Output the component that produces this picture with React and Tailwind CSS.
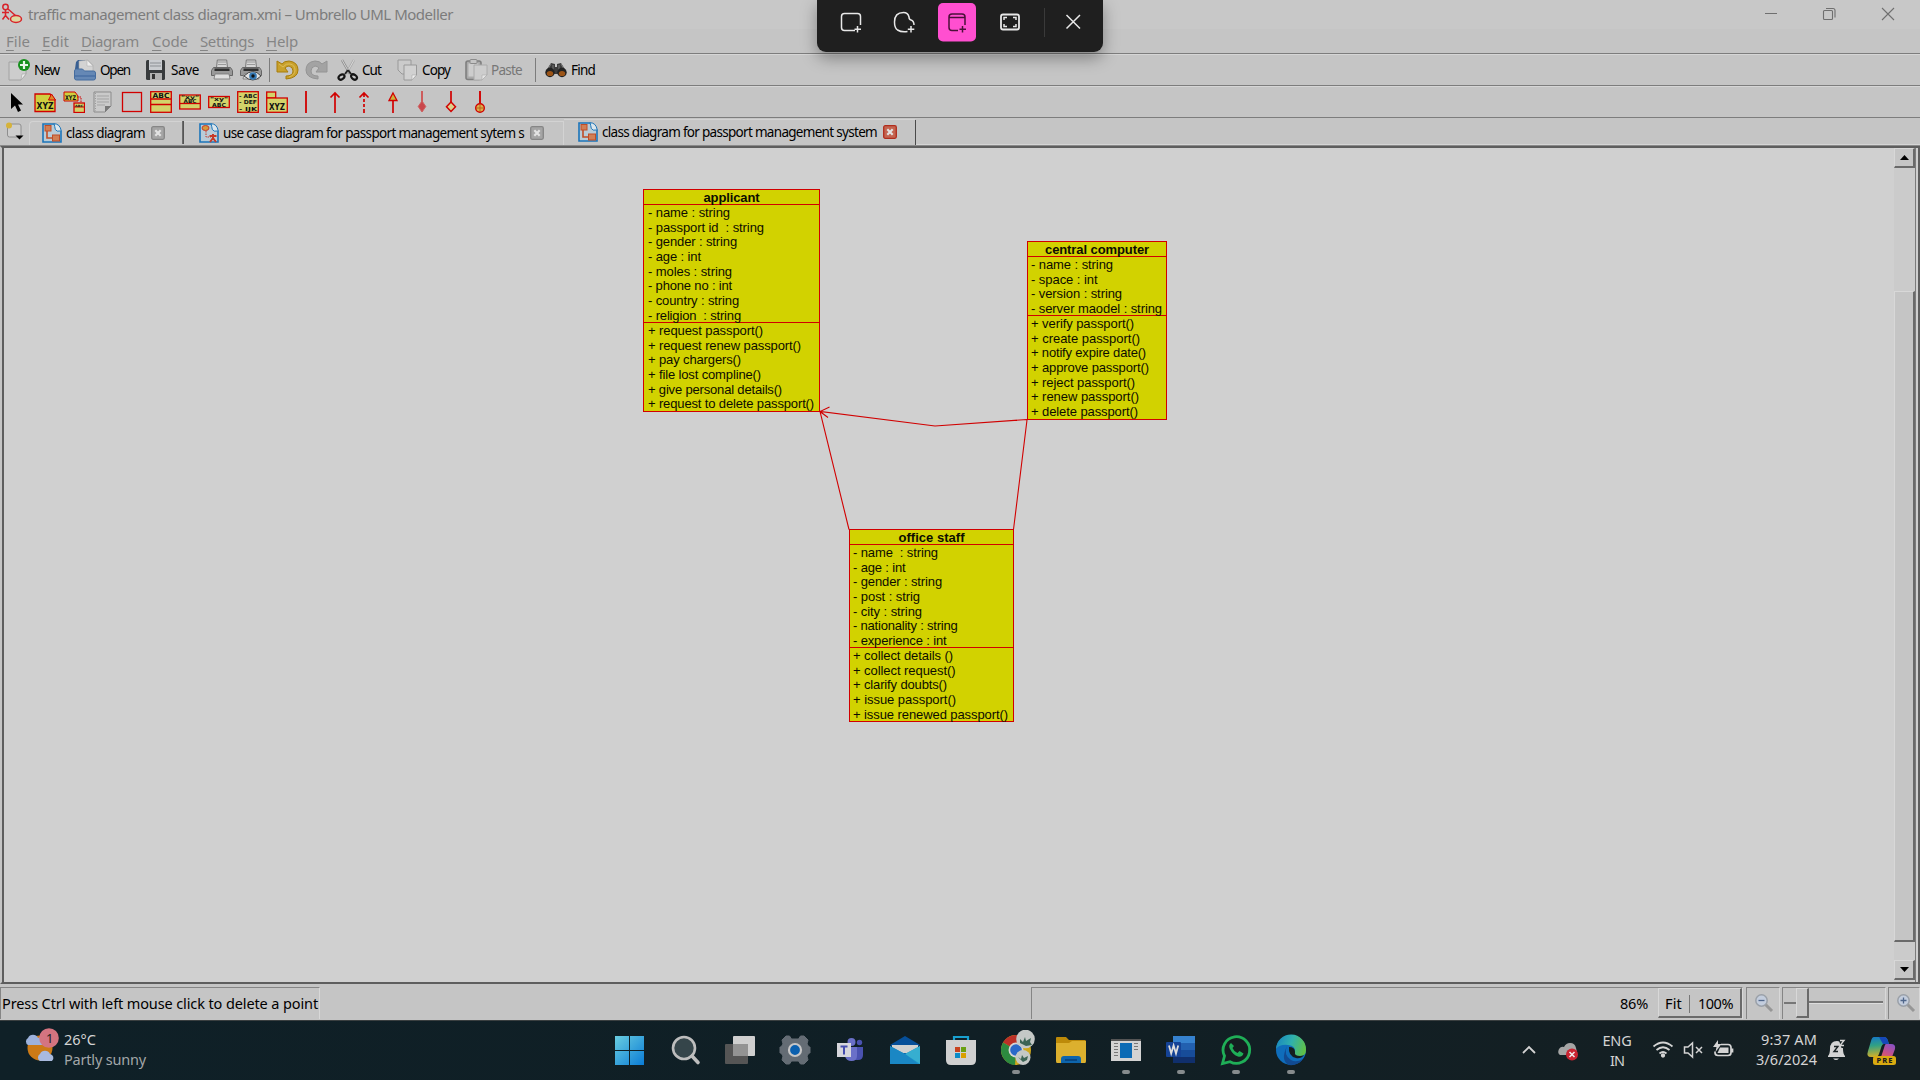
import React, { useLayoutEffect, useRef, useState } from "react";

/* Text that spreads its letters so that it fills exactly `w` pixels. */
function Fit({ w, className = "", children }) {
  const ref = useRef(null);
  const [ls, setLs] = useState(0);
  useLayoutEffect(() => {
    const natural = ref.current.getBoundingClientRect().width;
    const count = ref.current.textContent.length;
    setLs((w - natural) / count);
  }, [w]);
  return (
    <span ref={ref} className={"whitespace-pre shrink-0 " + className} style={{ letterSpacing: ls }}>
      {children}
    </span>
  );
}

const R = "#d10000";
const Y = "#d3d36a";

/* ---------- title bar ---------- */
function AppIcon() {
  return (
    <svg width="22" height="22" viewBox="0 0 22 22" fill="none" stroke="#d8232a" strokeWidth="1.5">
      <circle cx="4.500" cy="4" r="2.700" />
      <path d="M4.500 7v6M1 9.500h7M4.500 12.500l-3 4M4.500 12.500l3.500 4M7 6l8 7" />
      <ellipse cx="15" cy="16" rx="5.500" ry="3.500" fill="#dfd9a0" />
    </svg>
  );
}

function Title() {
  return (
    <div className="flex h-[29px] bg-[#c8c8c8] text-[#7c7c7c]">
      <div className="w-7 pt-[3px] pl-px"><AppIcon /></div>
      <Fit w={425} className="text-[15px] leading-[29px] font-['Noto_Sans',sans-serif]">traffic management class diagram.xmi – Umbrello UML Modeller</Fit>
      <svg className="ml-auto mr-6" width="132" height="28" viewBox="0 0 132 28" fill="none" stroke="#6f6f6f" strokeWidth="1.100">
        <path d="M1 13.500h12M118 8l12 12M130 8l-12 12" />
        <rect x="59.500" y="10.500" width="9" height="9" rx="1" />
        <path d="M62 8.500h7q2 0 2 2v7" />
      </svg>
    </div>
  );
}

const menus = [
  ["F", "ile", 24, 36],
  ["E", "dit", 27, 39],
  ["D", "iagram", 58, 71],
  ["C", "ode", 36, 48],
  ["S", "ettings", 54, 66],
  ["H", "elp", 32, 44],
];
function Menu() {
  return (
    <div className="flex h-6 text-[15px] leading-[25px] text-[#858585] font-['Noto_Sans',sans-serif]">
      {menus.map(([a, b, w, cell], i) => (
        <div key={i} className="flex shrink-0 pl-1.5" style={{ width: cell }}>
          <Fit w={w}><span className="underline underline-offset-[3px] decoration-1">{a}</span>{b}</Fit>
        </div>
      ))}
    </div>
  );
}

/* ---------- main toolbar ---------- */
const Svg = ({ w = 22, h = 22, children, className = "" }) => (
  <svg width={w} height={h} viewBox={`0 0 ${w} ${h}`} fill="none" className={"shrink-0 " + className}>{children}</svg>
);
const NewI = () => (
  <Svg w={23}>
    <path d="M1 3h17v12l-5 6H1z" fill="#cdcdcd" stroke="#a2a2a2" />
    <path d="M18 15l-5 6 1-6z" fill="#eee" stroke="#aaa" strokeWidth=".7" />
    <circle cx="16" cy="6" r="6" fill="#17911d" />
    <path d="M16 2v8M12 6h8" stroke="#e8f5e8" strokeWidth="2.200" />
  </Svg>
);
const OpenI = () => (
  <Svg>
    <path d="M2 3l2-2h7l2 9H1z" fill="#385f92" />
    <path d="M5 13V2l9-1 5 5v8z" fill="#d3d3d3" stroke="#aaa" strokeWidth=".6" />
    <path d="M13 1v6h6z" fill="#eee" stroke="#aaa" strokeWidth=".5" />
    <path d="M.5 12q0-2 2-2h6l2 2h9q2 0 2 2v5q0 2-2 2h-17q-2 0-2-2z" fill="#6588b5" stroke="#456c9f" />
    <path d="M1 17h20" stroke="#4f75a8" strokeWidth="2" />
  </Svg>
);
const SaveI = () => (
  <Svg>
    <rect x="1" y="1" width="19" height="20" rx="1.500" fill="#383b3d" />
    <rect x="4" y="1" width="13" height="10" fill="#c9ccd0" />
    <path d="M5 4h11M5 7h11" stroke="#8b8f94" />
    <rect x="5" y="14" width="12" height="7" fill="#b2b2b2" />
    <rect x="7" y="15" width="3" height="5" fill="#333" />
  </Svg>
);
const PrintI = ({ eye }) => (
  <Svg w={22}>
    <path d="M5.500 9l.8-8h9.400l.8 8" fill="#d6d6d6" stroke="#777" />
    <path d="M7 3h8M7 5.500h8" stroke="#9a9a9a" />
    <path d="M2.500 8.500h17l2 3v5H.5v-5z" fill="#999" stroke="#666" />
    <rect x="3.500" y="9.500" width="15" height="2.500" fill="#2e2e2e" />
    <path d="M4 15h14l1 5H3z" fill="#ddd" stroke="#777" strokeWidth=".8" />
    {eye && <g>
      <path d="M4 17q9-9 17 0-8 8-17 0z" fill="#e3e3e3" stroke="#444" />
      <circle cx="13" cy="17" r="3.800" fill="#3478b3" /><circle cx="13" cy="17" r="1.700" fill="#111" />
    </g>}
  </Svg>
);
const UndoI = () => (
  <Svg w={23}>
    <path d="M10 20q12-1 12-9 0-8-9-9-5 0-7 3L1 2v11h11L9 9q2-2 4-2 4 1 4 5 0 5-7 5z" fill="#c9a12c" stroke="#a77c0a" strokeWidth="1" strokeLinejoin="round" />
    <path d="M3 5l4 3q3-4 7-3 5 1 5 6 0 5-6 7" stroke="#dcbc58" strokeWidth="1" />
  </Svg>
);
const RedoI = () => (
  <Svg w={23}>
    <path d="M13 20Q1 19 1 11q0-8 9-9 5 0 7 3l5-3v11H11l3-4q-2-2-4-2-4 1-4 5 0 5 7 5z" fill="#a3a3a3" stroke="#949494" strokeWidth="1" strokeLinejoin="round" />
  </Svg>
);
const CutI = () => (
  <Svg w={22}>
    <path d="M5 1l8 14" stroke="#8b8b8b" strokeWidth="2.500" /><path d="M17 1L9 15" stroke="#a9a9a9" strokeWidth="2.500" />
    <path d="M5 1l8 14M17 1L9 15" stroke="#e5e5e5" strokeWidth=".8" />
    <path d="M11 11l-3 4M11 11l3 4" stroke="#222" strokeWidth="2" />
    <ellipse cx="4.500" cy="18" rx="3.200" ry="2.200" transform="rotate(-35 4.500 18)" stroke="#151515" strokeWidth="2.200" />
    <ellipse cx="17" cy="18" rx="3.200" ry="2.200" transform="rotate(35 17 18)" stroke="#151515" strokeWidth="2.200" />
  </Svg>
);
const CopyI = () => (
  <Svg w={21}>
    <path d="M1 1h13v14H5l-4-4z" fill="#cbcbcb" stroke="#999" />
    <path d="M7 6h12.500v10l-4.500 5H7z" fill="#d1d1d1" stroke="#999" />
    <path d="M19.500 16l-4.500 5v-5z" fill="#efefef" stroke="#aaa" strokeWidth=".6" />
  </Svg>
);
const PasteI = () => (
  <Svg w={23}>
    <rect x="1" y="2" width="15" height="18.500" rx="2" fill="#aaa" stroke="#7f7f7f" strokeWidth="1.600" />
    <rect x="3.500" y="4.500" width="10" height="13" fill="#cdcdcd" />
    <rect x="5" y=".5" width="7" height="4" rx="1" fill="#c5c5c5" stroke="#8b8b8b" />
    <path d="M9 6h13v10l-5 5H9z" fill="#cdcdcd" stroke="#aaa" /><path d="M22 16l-5 5v-5z" fill="#e5e5e5" stroke="#aaa" strokeWidth=".6" />
  </Svg>
);
const FindI = () => (
  <Svg w={22}>
    <path d="M1 12l5-8 4 1v3h2V5l4-1 5 8v3H1z" fill="#3c3c3c" />
    <path d="M6 5l-4 7M16 5l4 7M8 6v6M14 6v6" stroke="#777" />
    <circle cx="5" cy="13.500" r="4.700" fill="#222" /><circle cx="17" cy="13.500" r="4.700" fill="#222" />
    <ellipse cx="5" cy="14.500" rx="3.200" ry="2.600" fill="#9b5417" /><ellipse cx="17" cy="14.500" rx="3.200" ry="2.600" fill="#9b5417" />
  </Svg>
);
const Sep = ({ className }) => <div className={"h-6 w-px shrink-0 bg-[#7c7c7c] " + className} />;

/* cells: icon, label, label width, gap before the label, cell width */
const tools = [
  [<NewI />, "New", 25, 3, 66],
  [<OpenI />, "Open", 30, 4, 71],
  [<SaveI />, "Save", 28, 4, 66],
  [<PrintI />, "", 0, 0, 29],
  [<PrintI eye />, "", 0, 0, 29],
];
const tools2 = [
  [<UndoI />, "", 0, 0, 29],
  [<RedoI />, "", 0, 0, 32],
  [<CutI />, "Cut", 19, 3, 60],
  [<CopyI />, "Copy", 28, 4, 68],
];
function Tool({ t }) {
  const [icon, label, w, gap, cell] = t;
  return (
    <div className="flex shrink-0 items-center" style={{ width: cell, gap }}>
      {icon}
      {label && <Fit w={w}>{label}</Fit>}
    </div>
  );
}
function MainToolbar() {
  return (
    <div className="flex h-8 items-center border-t border-[#7d7d7d] pl-2 text-[13.5px] leading-5 text-black shadow-[inset_0_1px_0_#d6d6d6] font-['Noto_Sans',sans-serif]">
      {tools.map((t, i) => <Tool key={i} t={t} />)}
      <Sep className="mr-1.5" />
      {tools2.map((t, i) => <Tool key={i} t={t} />)}
      <div className="flex w-[70px] shrink-0 items-center gap-[3px] text-[#777]"><PasteI /><Fit w={31}>Paste</Fit></div>
      <Sep className="mr-[9px]" />
      <Tool t={[<FindI />, "Find", 24, 4, 60]} />
    </div>
  );
}

/* ---------- diagram toolbar ---------- */
const Box = (p) => <rect fill={Y} stroke={R} strokeWidth="1.300" {...p} />;
const Lbl = ({ x, y, s, w, children }) => (
  <text x={x} y={y} fontSize={s} fontWeight="700" fill="#111" textLength={w} lengthAdjust="spacingAndGlyphs" fontFamily="DejaVu Sans, sans-serif">{children}</text>
);
const shapes = [
  <path d="M6 2v16l4-3.500 3 6.500 3-1.500-3-6H18z" fill="#000" />,
  <g><path d="M1 3h15l5 6v11.500H1z" fill="#cfcf3f" stroke={R} strokeWidth="1.300" /><path d="M14.500 9l3-6 4 6z" fill="#dd8a2a" stroke={R} /><Lbl x="2.500" y="18" s="8" w="17">XYZ</Lbl></g>,
  <g><path d="M1 1h11l3 4v5H1z" fill="#cfcf3f" stroke={R} /><Lbl x="2" y="9" s="6.500" w="11">XYZ</Lbl><path d="M14 6h4v6" stroke={R} strokeDasharray="1.500 1" /><Box x="11" y="12" width="10.500" height="9.500" /><path d="M11 16h10" stroke={R} /><Lbl x="12" y="15.500" s="3" w="8">ABC</Lbl></g>,
  <g><path d="M2 1h17v14l-6 6H2z" fill="#cacaca" stroke="#8b8b8b" /><path d="M5 5h12M5 8h12M5 11h12M5 14h8" stroke="#a3a3a3" /><path d="M3.500 2v18" stroke="#999" strokeDasharray="1 1.500" /><path d="M19 15l-6 6v-6z" fill="#777" /></g>,
  <rect x="1.500" y="1.500" width="19" height="19" stroke={R} strokeWidth="1.300" />,
  <g><Box x=".7" y=".7" width="20.600" height="20.600" /><path d="M1 8h20M1 13.500h20" stroke={R} strokeWidth="1.300" /><Lbl x="2.500" y="7" s="7" w="17">ABC</Lbl></g>,
  <g><Box x=".7" y="4" width="20.600" height="14" /><path d="M1 12.500h20" stroke={R} strokeWidth="1.300" /><Lbl x="2" y="8" s="5" w="18">"xy"</Lbl><Lbl x="4.500" y="11.500" s="5" w="13">ABC</Lbl></g>,
  <g><Box x=".7" y="5.500" width="20.600" height="11" /><Lbl x="2" y="10" s="5.500" w="18">"xy"</Lbl><Lbl x="4" y="15.500" s="5.500" w="14">ABC</Lbl></g>,
  <g><Box x=".7" y=".7" width="20.600" height="20.600" /><Lbl x="2" y="6.500" s="5.500" w="18">- ABC</Lbl><Lbl x="2" y="13" s="5.500" w="18">- DEF</Lbl><Lbl x="2" y="19.500" s="5.500" w="18">- IJK</Lbl></g>,
  <g><Box x=".7" y="1" width="9" height="6" /><Box x=".7" y="7" width="20.600" height="14.300" /><Lbl x="3" y="19" s="8.500" w="16">XYZ</Lbl></g>,
  <path d="M11 0v22" stroke={R} strokeWidth="1.800" />,
  <path d="M11 22V2M6.500 6.500L11 2l4.500 4.500" stroke={R} strokeWidth="1.700" />,
  <path d="M11 22v-4m0-2v-3m0-2V8m0-2V2M6.500 6.500L11 2l4.500 4.500" stroke={R} strokeWidth="1.700" />,
  <g><path d="M11 22V9" stroke={R} strokeWidth="1.700" /><path d="M11 2l4 7.500H7z" fill="#cdb43c" stroke={R} strokeWidth="1.300" /></g>,
  <g><path d="M11 0v12" stroke="#cf3a3a" strokeWidth="1.500" /><path d="M11 10l3.800 5.500L11 21l-3.800-5.500z" fill="#c9474c" stroke="#cf6060" /></g>,
  <g><path d="M11 0v11" stroke={R} strokeWidth="1.700" /><path d="M11 11l4.500 4.700L11 20.500l-4.500-4.800z" fill="#ddd08c" stroke={R} strokeWidth="1.500" /></g>,
  <g><path d="M11 0v12" stroke={R} strokeWidth="1.900" /><circle cx="11" cy="17" r="4.300" fill="#dcb04a" stroke={R} strokeWidth="1.400" /><path d="M11 13v8M7 17h8" stroke="#b9651c" /></g>,
];
function DiagramToolbar() {
  return (
    <div className="flex h-8 items-center border-t border-[#7d7d7d] pl-px shadow-[inset_0_1px_0_#d6d6d6]">
      {shapes.map((s, i) => <div key={i} className="flex w-[29px] shrink-0 justify-center"><Svg>{s}</Svg></div>)}
    </div>
  );
}

/* ---------- tabs ---------- */
const DocIcon = ({ usecase }) => (
  <Svg w={20} h={20}>
    <path d="M1 1h11q4 0 7 7v11H1z" fill="#b9ccd8" stroke="#1b74b9" strokeWidth="1.600" />
    <path d="M12 0h8v8q-5-1-8-8z" fill="#c5c5c5" /><path d="M12 .7q6 0 7.300 7.300-5 1-6-1.500-.500-3-1.300-5.800z" fill="#dce6ec" stroke="#1b74b9" />
    {usecase ? <g stroke="#c63a28"><ellipse cx="6.500" cy="5" rx="3.500" ry="2.500" fill="#d59a3c" /><path d="M7 8v6h5" strokeDasharray="1.500 1" /><path d="M14 11v4M10.500 13h7M14 15l-3 4M14 15l3 4" strokeWidth="2" /></g>
      : <g fill="#d17f55" stroke="#c04d27"><rect x="3" y="2.500" width="6" height="5.500" /><rect x="10.500" y="12" width="7" height="6" /><path d="M5 8v7h5" fill="none" strokeWidth="1.600" /></g>}
  </Svg>
);
const Close = ({ red }) => (
  <Svg w={14} h={14}>
    <rect x=".7" y=".7" width="12.600" height="12.600" rx="1.500" fill={red ? "#c46450" : "#a5a5a5"} stroke={red ? "#b02c1c" : "#868686"} strokeWidth="1.300" />
    <path d="M4.300 4.300l5.400 5.400M9.700 4.300L4.300 9.700" stroke="#e3e3e3" strokeWidth="2.200" />
  </Svg>
);
function Tabs() {
  return (
    <div className="flex h-7 border-t border-[#7d7d7d] text-[13.5px] leading-5 text-black font-['Noto_Sans',sans-serif]">
      <div className="w-[29px] shrink-0 pt-[3px] pl-[5px]">
        <Svg w={20} h={20}>
          <rect x="2.500" y="3" width="13.500" height="13" rx="2" fill="#cdcdcd" stroke="#8e8e8e" />
          <circle cx="4" cy="4.500" r="3" fill="#d6b33a" /><path d="M10.500 14.500h8l-4 4z" fill="#000" />
        </Svg>
      </div>
      <div className="mt-[3px] flex h-6 w-[153px] shrink-0 items-center rounded-tl-sm border-t border-l border-[#d3d3d3] pb-px pl-3">
        <DocIcon /><Fit w={79} className="ml-1">class diagram</Fit><span className="ml-1.5"><Close /></span>
      </div>
      <div className="mt-[3px] h-[23px] w-0.5 shrink-0 border-l border-[#6b6b6b] bg-[#555]" />
      <div className="mt-[3px] flex h-6 w-[380px] shrink-0 items-center border-t border-r border-[#d3d3d3] pb-px pl-[15px]">
        <DocIcon usecase /><Fit w={301} className="ml-1">use case diagram for passport management sytem s</Fit><span className="ml-1.5"><Close /></span>
      </div>
      <div className="mt-px flex h-[26px] w-[351px] shrink-0 items-center border-t border-[#d3d3d3] pb-0.5 pl-3.5">
        <DocIcon /><Fit w={275} className="ml-1">class diagram for passport management system</Fit><span className="ml-1.5"><Close red /></span>
      </div>
      <div className="mt-0.5 h-[25px] w-px shrink-0 bg-[#4a4a4a]" />
      <div className="mt-[26px] h-px grow bg-[#d6d6d6]" />
    </div>
  );
}

/* ---------- diagram ---------- */
const classes = [
  {
    name: "applicant", tw: 56, pos: "left-[643px] top-[43px] w-[177px] h-[223px]", attrH: "h-[118px]", pad: "pl-1",
    attrs: [["- name : string", 82], ["- passport id  : string", 116], ["- gender : string", 89], ["- age : int", 53], ["- moles : string", 84], ["- phone no : int", 84], ["- country : string", 91], ["- religion  : string", 93]],
    ops: [["+ request passport()", 115], ["+ request renew passport()", 153], ["+ pay chargers()", 93], ["+ file lost compline()", 113], ["+ give personal details()", 134], ["+ request to delete passport()", 166]],
  },
  {
    name: "central computer", tw: 104, pos: "left-[1027px] top-[95px] w-[140px] h-[179px]", attrH: "h-[59px]", pad: "pl-[3px]",
    attrs: [["- name : string", 82], ["- space : int", 66.5], ["- version : string", 91], ["- server maodel : string", 131]],
    ops: [["+ verify passport()", 103], ["+ create passport()", 109], ["+ notify expire date()", 115], ["+ approve passport()", 118], ["+ reject passport()", 104], ["+ renew passport()", 108], ["+ delete passport()", 107]],
  },
  {
    name: "office staff", tw: 66, pos: "left-[849px] top-[383px] w-[165px] h-[193px]", attrH: "h-[103px]", pad: "pl-[3px]",
    attrs: [["- name  : string", 85], ["- age : int", 52.5], ["- gender : string", 89], ["- post : strig", 67], ["- city : string", 69], ["- nationality : string", 104.5], ["- experience : int", 93.5]],
    ops: [["+ collect details ()", 100], ["+ collect request()", 102.5], ["+ clarify doubts()", 94], ["+ issue passport()", 103], ["+ issue renewed passport()", 155]],
  },
];
const Rows = ({ rows }) => rows.map(([t, w], i) => <div key={i} className="flex h-[14.7px] leading-[15px]"><Fit w={w}>{t}</Fit></div>);
function ClassBox({ c }) {
  return (
    <div className={"absolute flex flex-col border border-[#d10000] bg-[#d2d200] text-[13px] text-[#0d0d00] font-['Liberation_Sans',Arial,sans-serif] " + c.pos}>
      <div className="flex h-[15px] shrink-0 justify-center border-b border-[#d10000] leading-[15px] font-bold"><Fit w={c.tw}>{c.name}</Fit></div>
      <div className={"shrink-0 border-b border-[#d10000] " + c.pad + " " + c.attrH}><Rows rows={c.attrs} /></div>
      <div className={c.pad}><Rows rows={c.ops} /></div>
    </div>
  );
}
const btn = "border-t border-l border-r-2 border-b-2 border-t-[#d8d8d8] border-l-[#d8d8d8] border-r-[#6a6a6a] border-b-[#6a6a6a] bg-[#c5c5c5]";
function Canvas() {
  return (
    <div className="relative flex h-[838px] border-t-2 border-r-2 border-b-2 border-l-2 border-t-[#5e5e5e] border-r-[#5e5e5e] border-b-[#5e5e5e] border-l-[#c5c5c5] bg-[#d0d0d0]">
      <div className="w-0.5 shrink-0 bg-[#5e5e5e]" />
      <div className="grow" />
      <div className="flex w-[21px] flex-col bg-[#cbcbcb] pb-0.5">
        <div className={"flex h-5 items-center justify-center " + btn}><Svg w={9} h={5}><path d="M0 5h9L4.500 0z" fill="#000" /></Svg></div>
        <div className="h-[123px]" />
        <div className={"h-[651px] " + btn} />
        <div className="grow" />
        <div className={"flex h-5 items-center justify-center " + btn}><Svg w={9} h={5}><path d="M0 0h9L4.500 5z" fill="#000" /></Svg></div>
      </div>
      <div className="w-[3px] border-l border-[#7b7b7b] bg-[#cfcfcf]" />
      <div className="absolute -top-0.5 -left-0.5">
        <svg className="absolute top-0 left-0" width="1300" height="700" viewBox="0 146 1300 700" fill="none" stroke="#d10000" strokeWidth="1.100">
          <path d="M1027 419.500L935 426 820 411.500L849 529.500M1027 420L1013.500 529.500M829.500 407L820 411.500L828 417.500" />
        </svg>
        {classes.map((c) => <ClassBox key={c.name} c={c} />)}
      </div>
    </div>
  );
}

/* ---------- status bar ---------- */
const inset = "border-t border-l border-r border-t-[#858585] border-l-[#858585] border-r-[#d8d8d8]";
const Mag = ({ plus }) => (
  <Svg w={20} h={20}>
    <path d="M11 11l7 7" stroke="#969696" strokeWidth="3" /><circle cx="7.500" cy="7.500" r="5.700" fill="#c3cddd" stroke="#9aa0a8" strokeWidth="1.500" />
    <path d={plus ? "M4.500 7.500h6M7.500 4.500v6" : "M4.500 7.500h6"} stroke="#4f668a" strokeWidth="1.300" />
  </Svg>
);
function Status() {
  return (
    <div className="flex h-[37px] border-b border-[#3a3f40] pt-[3px] text-[14.5px] leading-[30px] text-black font-['Noto_Sans',sans-serif]">
      <div className={"flex h-8 w-80 pl-px " + inset}><Fit w={316}>Press Ctrl with left mouse click to delete a point</Fit></div>
      <div className={"ml-[711px] flex h-8 w-[712px] " + inset}>
        <Fit w={28} className="ml-[588px]">86%</Fit>
        <div className={"ml-2.5 flex h-[30px] w-[84px] leading-[28px] " + btn}>
          <Fit w={17} className="ml-1.5">Fit</Fit>
          <div className="mt-1.5 ml-[7px] h-[18px] w-px bg-[#777]" />
          <Fit w={35} className="ml-2">100%</Fit>
        </div>
      </div>
      <div className={"ml-[3px] flex h-8 w-[34px] items-center pb-0.5 pl-[7px] " + inset}><Mag /></div>
      <div className={"ml-0.5 flex h-8 w-[104px] items-center pb-0.5 pl-px " + inset}>
        <div className="h-0.5 w-3 bg-[#777]" />
        <div className={"h-[30px] w-[13px] " + btn} />
        <div className="h-[3px] w-[74px] border-b border-[#ddd] bg-[#777]" />
      </div>
      <div className={"ml-0.5 flex h-8 w-[32px] items-center pb-0.5 pl-[7px] " + inset}><Mag plus /></div>
    </div>
  );
}

/* ---------- task bar ---------- */
const I = ({ children }) => <Svg w={38} h={40}>{children}</Svg>;
const apps = [
  [<I><defs><linearGradient id="wn" x1="4" y1="6" x2="33" y2="35" gradientUnits="userSpaceOnUse"><stop stopColor="#69cde0" /><stop offset="1" stopColor="#0a7cd6" /></linearGradient></defs><path d="M4 6h14v14H4zM19 6h14v14H19zM4 21h14v14H4zM19 21h14v14H19z" fill="url(#wn)" /></I>],
  [<I><circle cx="18" cy="18" r="11" fill="#35454a" stroke="#bdbdbd" strokeWidth="2.600" /><path d="M26 26l6 6.500" stroke="#bdbdbd" strokeWidth="3.600" strokeLinecap="round" /></I>],
  [<I><rect x="12" y="6" width="22" height="20" rx="1" fill="#cfcfcf" /><rect x="4" y="14" width="23" height="20" rx="1" fill="#555" /><rect x="12" y="14" width="15" height="12" fill="#939393" /></I>],
  [<I><path d="M10 6h3.500l2 3h7l2-3H28l4 4-1 4 2 3h1v6h-1l-2 3 1 4-4 4h-3.500l-2-3h-7l-2 3H10l-4-4 1-4-2-3H4v-6h1l2-3-1-4z" fill="#646c74" stroke="#646c74" strokeLinejoin="round" /><circle cx="19" cy="20" r="6" fill="#0b60ae" stroke="#c6c6c6" strokeWidth="2.200" /></I>],
  [<I><circle cx="20.500" cy="12" r="4" fill="#6a70c8" /><circle cx="28.500" cy="12.500" r="2.700" fill="#4a52b0" /><path d="M23 17h9v8q0 5-5 5h-4z" fill="#4a52b0" /><path d="M14 17h12v9q0 5-5.500 5T14 26z" fill="#6a70c8" /><rect x="6" y="13" width="14" height="14" fill="#d6d6dc" /><path d="M9.500 16.500h7M13 16.500v8" stroke="#454db0" strokeWidth="2" /></I>],
  [<I><path d="M4 15L19 6l15 9-15 10z" fill="#064f99" /><path d="M6 15h26v8H6z" fill="#d0d0d0" /><path d="M4 16v18h30V16L19 24z" fill="#1c92c8" /><path d="M34 16L19 24l15 10z" fill="#36aed0" /><path d="M4 16l15 8 13 10H4z" fill="#1a87c4" /></I>],
  [<I><path d="M12 12V7h14v5" stroke="#18a0cf" strokeWidth="2.200" /><path d="M4 10h30v20q0 5-5 5H9q-5 0-5-5z" fill="#d0d0d0" /><path d="M13 17h5v5h-5z" fill="#c8431f" /><path d="M19 17h5v5h-5z" fill="#6aa012" /><path d="M13 23h5v5h-5z" fill="#0c8cc8" /><path d="M19 23h5v5h-5z" fill="#d9a000" /></I>],
  [<I><circle cx="19" cy="20" r="15" fill="#cfa81d" /><path d="M19 20L6 12.500A15 15 0 0132 12.500z" fill="#bb3027" /><path d="M19 20L6 12.500A15 15 0 0018 35z" fill="#2c8a3f" /><circle cx="19" cy="20" r="7.500" fill="#d5d5d5" /><circle cx="19" cy="20" r="5.800" fill="#2a69c9" /><circle cx="28.500" cy="9" r="9.300" fill="#c4c8c6" /><path d="M23 9l3 3 2-5 1 4 5-3-1 4 2 3-6 1-6-3z" fill="#3c6455" /><circle cx="26" cy="27.500" r="7.500" fill="#c4c8c6" /><path d="M21 27l3 2 1-4 2 3 4-2-1 4-4 2z" fill="#3c6455" /></I>, 1],
  [<I><path d="M4 8q0-1 1-1h9l3 3h16q1 0 1 2v6H4z" fill="#bd8a09" /><path d="M4 13h13l3-2h14v20q0 2-1 2H5q-1 0-1-2z" fill="#dcb02e" /><path d="M9 33v-4q0-3 3-3h14q3 0 3 3v4z" fill="#0e65ac" /><path d="M13 30h12" stroke="#073e76" strokeWidth="1.500" /></I>],
  [<I><rect x="4" y="9" width="30" height="22" fill="#d3d3d3" /><path d="M4 9h30v2H4z" fill="#555" /><rect x="13" y="13" width="12" height="15" fill="#0c6bb5" /><path d="M7 13.500h4M7 16.500h4M7 19.500h4M7 22.500h4M7 25.500h4M27 13.500h4M27 16.500h4M27 19.500h4" stroke="#777" /></I>, 1],
  [<I><path d="M11 6h22v8H11z" fill="#3682cf" /><path d="M11 13h22v7H11z" fill="#2260b0" /><path d="M11 20h22v7H11z" fill="#174c99" /><path d="M11 27h22v6H11z" fill="#102f6c" /><rect x="4" y="12" width="15" height="15" rx="1" fill="#154396" /><path d="M7 15.500l2.200 8 2.400-8 2.400 8 2.200-8" stroke="#ddd" strokeWidth="1.800" /></I>, 1],
  [<I><path d="M5.500 33.500l2-7.500A13.300 13.300 0 1113 31.700z" fill="#151d20" stroke="#1fae57" strokeWidth="2.800" /><path d="M14 13q-3 2-1 6 3 6 8 7.500 4 1 5.500-3l-4-2.500-2 2q-4-2-5-5l1.500-2z" fill="#1fae57" /></I>, 1],
  [<I><defs><linearGradient id="eg" x1="4" y1="8" x2="34" y2="18" gradientUnits="userSpaceOnUse"><stop stopColor="#1885c0" /><stop offset=".5" stopColor="#2fb0ae" /><stop offset="1" stopColor="#62c043" /></linearGradient></defs><circle cx="19" cy="20" r="15" fill="#0f6dbb" /><path d="M4 19A15 15 0 0134 20q0 6-6 6-7 0-5-4 1-6-7-7-8-1-12 4z" fill="url(#eg)" /><path d="M15 16q-4 9 4 14 5 3 12-1-5 7-14 6-9-4-2-19z" fill="#114a91" /><path d="M17 17q6 0 6 5-1 4 5 4 2 0 4-1-3 4-8 3-8-2-7-11z" fill="#151d20" /></I>, 1],
];
function Taskbar() {
  return (
    <div className="flex h-[59px] shrink-0 bg-linear-to-r from-[#0f2027] via-[#101f25] via-50% to-[#151f22] text-[#d4d4d4] font-['Noto_Sans',sans-serif] text-[14.5px]">
      <div className="w-16 shrink-0 pt-1.5 pl-6">
        <Svg w={36} h={38}>
          <circle cx="16" cy="21" r="12.500" fill="#cc7a16" />
          <path d="M4 18a4 4 0 010-7 5.500 5.500 0 0110 0 4 4 0 014 7z" fill="#9db2dc" />
          <path d="M16 34a4 4 0 010-7 5.500 5.500 0 0110 0 4 4 0 012 7z" fill="#a9bade" />
          <circle cx="25" cy="11" r="9.800" fill="#d47480" />
          <text x="22" y="16" fontSize="13" fill="#222" fontFamily="Noto Sans, sans-serif">1</text>
        </Svg>
      </div>
      <div className="w-[538.500px] shrink-0 pt-2 leading-5">
        <div className="flex"><Fit w={32}>26°C</Fit></div>
        <div className="flex text-[#a3a7a9]"><Fit w={82}>Partly sunny</Fit></div>
      </div>
      {apps.map(([icon, on], i) => (
        <div key={i} className="flex w-[55.080px] shrink-0 flex-col items-center pt-[9px]">
          {icon}
          {on && <div className="h-1 w-2 rounded-full bg-[#868b8d]" />}
        </div>
      ))}
      <div className="-mt-px ml-auto flex w-[401px] shrink-0">
        <Svg w={80} h={60}>
          <path d="M4 33l6-6 6 6" stroke="#d4d4d4" strokeWidth="1.800" />
          <path d="M41 35q-3-2-1-6 2-3 5-2 2-4 6-4 5 0 6 5 2 6-2 7z" fill="#a5a5a5" /><circle cx="53" cy="34.500" r="6" fill="#c92432" /><path d="M50.500 32l5 5M55.500 32l-5 5" stroke="#eee" strokeWidth="1.500" />
        </Svg>
        <div className="flex w-[36px] flex-col items-center pt-2.5 leading-5"><Fit w={29}>ENG</Fit><Fit w={14}>IN</Fit></div>
        <Svg w={113} h={60}>
          <g stroke="#d4d4d4" strokeWidth="1.700">
            <path d="M18.500 26.500q9.500-8 19 0M21.500 30q6.500-5.500 13 0M24.500 33.500q3.500-3 7 0" /><circle cx="28" cy="35.500" r="1.300" fill="#d4d4d4" />
            <path d="M49.500 27h3.500l4.500-4v14L53 33h-3.500zM61 27l6 6M67 27l-6 6" strokeWidth="1.500" />
            <path d="M86 24.500h7q3 0 3 3v5q0 3-3 3H83q-3 0-3-3v-1M97.500 28.500v4" /><path d="M85 27.500h8.500v5.500H82.500z" fill="#d4d4d4" stroke="none" /><path d="M83 20l-5 7h3.500l-1 5 6-8h-3.500z" fill="#d4d4d4" stroke="none" />
          </g>
        </Svg>
        <div className="flex w-[69px] flex-col items-end pt-[9px] leading-5"><Fit w={56}>9:37 AM</Fit><Fit w={61}>3/6/2024</Fit></div>
        <Svg w={103} h={60}>
          <path d="M11 36q2-2 2-7 0-8 7-8 6 0 6 8 0 5 2 7v1H11z" fill="#d4d4d4" /><path d="M16 38.500q3 3 6 0" fill="#d4d4d4" /><path d="M17 26.500h4l-4 5h4" stroke="#1a2224" strokeWidth="1.400" /><path d="M21.500 19h8v9h-5z" fill="#151f22" /><path d="M23 20.500h4l-4 5h4" stroke="#d4d4d4" strokeWidth="1.400" />
          <defs><linearGradient id="ca" x1="52" y1="17" x2="54" y2="37" gradientUnits="userSpaceOnUse"><stop stopColor="#1578c8" /><stop offset=".45" stopColor="#31a184" /><stop offset="1" stopColor="#d0b02a" /></linearGradient><linearGradient id="cb" x1="72" y1="22" x2="64" y2="40" gradientUnits="userSpaceOnUse"><stop stopColor="#8451c9" /><stop offset=".6" stopColor="#cc5182" /><stop offset="1" stopColor="#d8793c" /></linearGradient></defs>
          <path d="M57 17h10q3 0 4 4l1 3h-5q-2 0-3 4l-2 6q-1 3-4 3h-4q-5 0-3-6l3-10q1-4 3-4z" fill="url(#ca)" /><path d="M62 17h5q3 0 4 4l1 3h-6z" fill="#1648b8" /><path d="M69 24h5q5 0 4 5l-3 8q-1 3-4 3h-8l4-12q1-4 2-4z" fill="url(#cb)" />
          <rect x="56" y="36" width="23" height="9" rx="2.500" fill="#d9aa10" />
          <text x="59.500" y="43.300" fontSize="7.500" fontWeight="800" fill="#1c1c1c" textLength="16" fontFamily="Noto Sans, sans-serif">PRE</text>
        </Svg>
      </div>
    </div>
  );
}

/* ---------- snipping overlay ---------- */
function Snip() {
  return (
    <div className="absolute top-0 left-[817px] flex h-[52px] w-[286px] rounded-b-[9px] bg-[#1f1f1f] shadow-[0_6px_16px_rgba(0,0,0,0.35)]">
      <svg width="286" height="52" viewBox="817 0 286 52" fill="none" stroke="#e8e8e8" strokeWidth="1.500">
        <path d="M855 30.500h-10.500q-3 0-3-3v-11q0-3 3-3h13q3 0 3 3V25M857.500 26v6.500M854.500 29.200h6.500" />
        <path d="M907.500 31.500q-6 1-10-1.500-3-2-3-8 0-9.500 9-9.500 4.500 0 5.500 4.500 0 2.500 2 3 3 1 3 5M911 26v6.500M907.800 29.200h6.500" />
        <rect x="938" y="3" width="38" height="38.500" rx="5" fill="#ff4fd0" stroke="none" />
        <path d="M958 30.500h-6q-3 0-3-3v-10.500q0-3 3-3h10q3 0 3 3V25M949 17.500h16M962.500 26v6.500M959.500 29.200h6.500" stroke="#4b1038" />
        <rect x="1001" y="14.500" width="18" height="15" rx="2" strokeWidth="1.800" />
        <path d="M1004 20v-2.500h3M1013 17.500h3V20M1016 24v2.500h-3M1007 26.500h-3V24" />
        <path d="M1044.500 8v29" stroke="#3a3a3a" strokeWidth="1" />
        <path d="M1066.500 15l13.500 13.500M1080 15l-13.500 13.500" />
      </svg>
    </div>
  );
}

export default function App() {
  return (
    <div className="relative flex h-[1080px] w-[1920px] flex-col overflow-hidden bg-[#c5c5c5]">
      <Title />
      <Menu />
      <MainToolbar />
      <DiagramToolbar />
      <Tabs />
      <div className="h-px shrink-0 bg-[#8a8a8a]" />
      <Canvas />
      <Status />
      <Taskbar />
      <Snip />
    </div>
  );
}
